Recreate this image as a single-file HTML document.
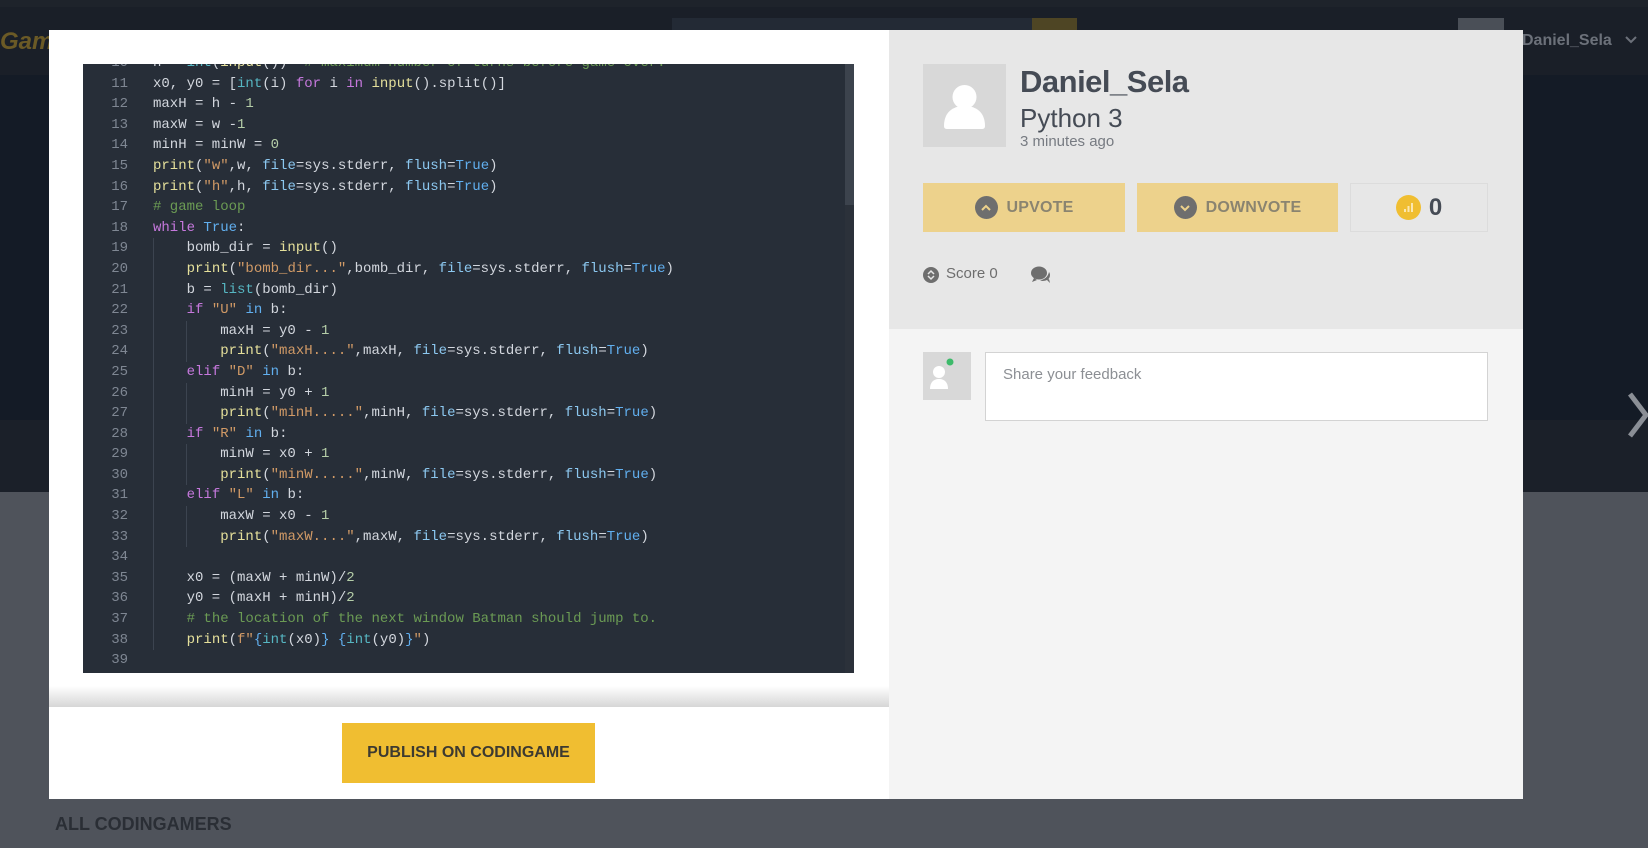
<!DOCTYPE html>
<html><head><meta charset="utf-8"><style>
*{margin:0;padding:0;box-sizing:border-box}
body{width:1648px;height:848px;overflow:hidden;position:relative;background:#4f535b;font-family:"Liberation Sans",sans-serif}
.abs{position:absolute}
.code{left:83px;top:64px;width:771px;height:609px;background:#272e38;overflow:hidden}
.inner{position:absolute;top:-11px;left:0;right:0;font-family:"Liberation Mono",monospace;font-size:14px;line-height:20.6px;color:#d3d7de;white-space:normal}
.ln{display:block;position:relative;height:20.6px}
.ln b{font-weight:normal;position:absolute;left:0;width:45px;text-align:right;color:#7f8793}
.ln span.c{position:absolute;left:70px;white-space:pre}
.k{color:#c678dd}.bi{color:#56b6c2}.s{color:#d19a66}.f{color:#e5e09b}.p{color:#8cc8f0}.t{color:#61afef}.cm{color:#6b9b54}.n{color:#b5cea8}
.guide{position:absolute;width:1px;background:#3c4450}
.sb{position:absolute;right:0;top:0;width:9px;height:100%;background:#2b313a}
.sb div{height:141px;background:#3c434d}
.btn{position:absolute;height:49px;background:#edd28c;color:#8a8470;font-size:16px;font-weight:bold;display:flex;align-items:center;justify-content:center;letter-spacing:0.2px}
.circ{width:23px;height:23px;border-radius:50%;background:#6e6e6e;margin-right:9px;display:flex;align-items:center;justify-content:center}
</style></head><body>
<div class="abs" style="left:0;top:0;width:1648px;height:7px;background:#1e232b"></div>
<div class="abs" style="left:0;top:7px;width:1648px;height:68px;background:#1a1f28"></div>
<div class="abs" style="left:0;top:75px;width:1648px;height:345px;background:#141b26"></div>
<div class="abs" style="left:0;top:420px;width:1648px;height:72px;background:#1b2029"></div>
<div class="abs" style="left:0;top:28px;font:italic bold 24px 'Liberation Sans',sans-serif;color:#6b5a26">Gam</div>
<div class="abs" style="left:672px;top:18px;width:360px;height:30px;background:#232a35"></div>
<div class="abs" style="left:1032px;top:18px;width:45px;height:30px;background:#4e4524"></div>
<div class="abs" style="left:1458px;top:18px;width:46px;height:30px;background:#4a4f57"></div>
<div class="abs" style="left:1522px;top:32px;font-size:16px;font-weight:bold;color:#6c717a">Daniel_Sela</div>
<svg class="abs" style="left:1624px;top:35px" width="14" height="10"><path d="M2 2l5 5 5-5" stroke="#6c717a" stroke-width="2" fill="none"/></svg>
<svg class="abs" style="left:1626px;top:390px" width="22" height="50"><path d="M4 4l16 21-16 21" stroke="#8b8f96" stroke-width="5" fill="none"/></svg>
<div class="abs" style="left:55px;top:814px;font-size:18px;font-weight:bold;color:#2a2e35">ALL CODINGAMERS</div>

<div class="abs" style="left:49px;top:30px;width:840px;height:769px;background:#fff"></div>
<div class="abs" style="left:49px;top:686px;width:840px;height:21px;background:linear-gradient(#fff,#d6d6d6)"></div>
<div class="abs" style="left:49px;top:707px;width:840px;height:92px;background:#fff"></div>
<div class="abs" style="left:342px;top:723px;width:253px;height:60px;background:#f0be31;color:#3d3a30;font-size:16px;font-weight:bold;display:flex;align-items:center;justify-content:center">PUBLISH ON CODINGAME</div>

<div class="abs code">
<div class="inner"><span class="ln"><b>10</b><span class="c">h = <span class="bi">int</span>(<span class="f">input</span>())  <span class="cm"># maximum number of turns before game over.</span></span></span><span class="ln"><b>11</b><span class="c">x0, y0 = [<span class="bi">int</span>(i) <span class="k">for</span> i <span class="k">in</span> <span class="f">input</span>().split()]</span></span><span class="ln"><b>12</b><span class="c">maxH = h - <span class="n">1</span></span></span><span class="ln"><b>13</b><span class="c">maxW = w -<span class="n">1</span></span></span><span class="ln"><b>14</b><span class="c">minH = minW = <span class="n">0</span></span></span><span class="ln"><b>15</b><span class="c"><span class="f">print</span>(<span class="s">"w"</span>,w, <span class="p">file</span>=sys.stderr, <span class="p">flush</span>=<span class="t">True</span>)</span></span><span class="ln"><b>16</b><span class="c"><span class="f">print</span>(<span class="s">"h"</span>,h, <span class="p">file</span>=sys.stderr, <span class="p">flush</span>=<span class="t">True</span>)</span></span><span class="ln"><b>17</b><span class="c"><span class="cm"># game loop</span></span></span><span class="ln"><b>18</b><span class="c"><span class="k">while</span> <span class="t">True</span>:</span></span><span class="ln"><b>19</b><span class="c">    bomb_dir = <span class="f">input</span>()</span></span><span class="ln"><b>20</b><span class="c">    <span class="f">print</span>(<span class="s">"bomb_dir..."</span>,bomb_dir, <span class="p">file</span>=sys.stderr, <span class="p">flush</span>=<span class="t">True</span>)</span></span><span class="ln"><b>21</b><span class="c">    b = <span class="bi">list</span>(bomb_dir)</span></span><span class="ln"><b>22</b><span class="c">    <span class="k">if</span> <span class="s">"U"</span> <span class="t">in</span> b:</span></span><span class="ln"><b>23</b><span class="c">        maxH = y0 - <span class="n">1</span></span></span><span class="ln"><b>24</b><span class="c">        <span class="f">print</span>(<span class="s">"maxH...."</span>,maxH, <span class="p">file</span>=sys.stderr, <span class="p">flush</span>=<span class="t">True</span>)</span></span><span class="ln"><b>25</b><span class="c">    <span class="k">elif</span> <span class="s">"D"</span> <span class="t">in</span> b:</span></span><span class="ln"><b>26</b><span class="c">        minH = y0 + <span class="n">1</span></span></span><span class="ln"><b>27</b><span class="c">        <span class="f">print</span>(<span class="s">"minH....."</span>,minH, <span class="p">file</span>=sys.stderr, <span class="p">flush</span>=<span class="t">True</span>)</span></span><span class="ln"><b>28</b><span class="c">    <span class="k">if</span> <span class="s">"R"</span> <span class="t">in</span> b:</span></span><span class="ln"><b>29</b><span class="c">        minW = x0 + <span class="n">1</span></span></span><span class="ln"><b>30</b><span class="c">        <span class="f">print</span>(<span class="s">"minW....."</span>,minW, <span class="p">file</span>=sys.stderr, <span class="p">flush</span>=<span class="t">True</span>)</span></span><span class="ln"><b>31</b><span class="c">    <span class="k">elif</span> <span class="s">"L"</span> <span class="t">in</span> b:</span></span><span class="ln"><b>32</b><span class="c">        maxW = x0 - <span class="n">1</span></span></span><span class="ln"><b>33</b><span class="c">        <span class="f">print</span>(<span class="s">"maxW...."</span>,maxW, <span class="p">file</span>=sys.stderr, <span class="p">flush</span>=<span class="t">True</span>)</span></span><span class="ln"><b>34</b><span class="c"></span></span><span class="ln"><b>35</b><span class="c">    x0 = (maxW + minW)/<span class="n">2</span></span></span><span class="ln"><b>36</b><span class="c">    y0 = (maxH + minH)/<span class="n">2</span></span></span><span class="ln"><b>37</b><span class="c">    <span class="cm"># the location of the next window Batman should jump to.</span></span></span><span class="ln"><b>38</b><span class="c">    <span class="f">print</span>(<span class="s">f"</span><span class="t">{</span><span class="bi">int</span>(x0)<span class="t">}</span> <span class="t">{</span><span class="bi">int</span>(y0)<span class="t">}</span><span class="s">"</span>)</span></span><span class="ln"><b>39</b><span class="c"></span></span></div>
<div class="guide" style="left:70px;top:174px;height:412px"></div>
<div class="guide" style="left:103px;top:257px;height:41px"></div>
<div class="guide" style="left:103px;top:319px;height:41px"></div>
<div class="guide" style="left:103px;top:380px;height:41px"></div>
<div class="guide" style="left:103px;top:442px;height:41px"></div>
<div class="sb"><div></div></div>
</div>

<div class="abs" style="left:889px;top:30px;width:634px;height:299px;background:#e7e7e7"></div>
<div class="abs" style="left:889px;top:329px;width:634px;height:470px;background:#f4f4f4"></div>
<div class="abs" style="left:923px;top:64px;width:83px;height:83px;background:#d8d8d8"></div>
<svg class="abs" style="left:923px;top:64px" width="83" height="83"><circle cx="41.5" cy="33" r="12" fill="#fff"/><path d="M21 62c0-14 9-20 20.5-20s20.5 6 20.5 20c0 2-1 3-3 3H24c-2 0-3-1-3-3z" fill="#fff"/></svg>
<div class="abs" style="left:1020px;top:64px;font-size:31px;font-weight:bold;color:#454b55;letter-spacing:-0.5px">Daniel_Sela</div>
<div class="abs" style="left:1020px;top:103px;font-size:26px;color:#454b55">Python 3</div>
<div class="abs" style="left:1020px;top:133px;font-size:15px;color:#777b82">3 minutes ago</div>

<div class="btn" style="left:923px;top:183px;width:202px"><div class="circ"><svg width="10" height="8"><path d="M1 6l4-4 4 4" stroke="#edd28c" stroke-width="2" fill="none"/></svg></div>UPVOTE</div>
<div class="btn" style="left:1137px;top:183px;width:201px"><div class="circ"><svg width="10" height="8"><path d="M1 2l4 4 4-4" stroke="#edd28c" stroke-width="2" fill="none"/></svg></div>DOWNVOTE</div>
<div class="abs" style="left:1350px;top:183px;width:138px;height:49px;border:1px solid #dcdcdc;display:flex;align-items:center;justify-content:center">
<svg width="25" height="25" style="margin-right:8px"><circle cx="12.5" cy="12.5" r="12.5" fill="#f0be31"/><rect x="8" y="14" width="2" height="3" fill="#fbe7b0"/><rect x="11.5" y="11" width="2" height="6" fill="#fbe7b0"/><rect x="15" y="8" width="2" height="9" fill="#fbe7b0"/></svg>
<span style="font-size:24px;color:#454b55;font-weight:bold">0</span></div>

<svg class="abs" style="left:923px;top:267px" width="16" height="16"><circle cx="8" cy="8" r="8" fill="#6e6e6e"/><path d="M5 7l3-3 3 3M5 9l3 3 3-3" stroke="#e7e7e7" stroke-width="1.5" fill="none"/></svg>
<div class="abs" style="left:946px;top:265px;font-size:15px;color:#6e6e6e">Score 0</div>
<svg class="abs" style="left:1030px;top:265px" width="22" height="20"><ellipse cx="9" cy="8" rx="8" ry="6.5" fill="#6e6e6e"/><path d="M4 13l-2 4 5-2z" fill="#6e6e6e"/><path d="M12 16c5 0 8-2 8-6 0-1-.3-2-1-3-1 5-5 8-9 8z M17 15l3 3-1-4z" fill="#6e6e6e"/></svg>

<div class="abs" style="left:923px;top:352px;width:48px;height:48px;background:#d8d8d8"></div>
<svg class="abs" style="left:923px;top:352px" width="48" height="48"><circle cx="16" cy="20" r="6" fill="#fff"/><path d="M7 37c0-7 4-10 9-10s9 3 9 10z" fill="#fff"/><circle cx="27" cy="10" r="3.5" fill="#3dba6a"/></svg>
<div class="abs" style="left:985px;top:352px;width:503px;height:69px;background:#fff;border:1px solid #d3d3d3"></div>
<div class="abs" style="left:1003px;top:366px;font-size:15px;color:#8c8f94">Share your feedback</div>
</body></html>
